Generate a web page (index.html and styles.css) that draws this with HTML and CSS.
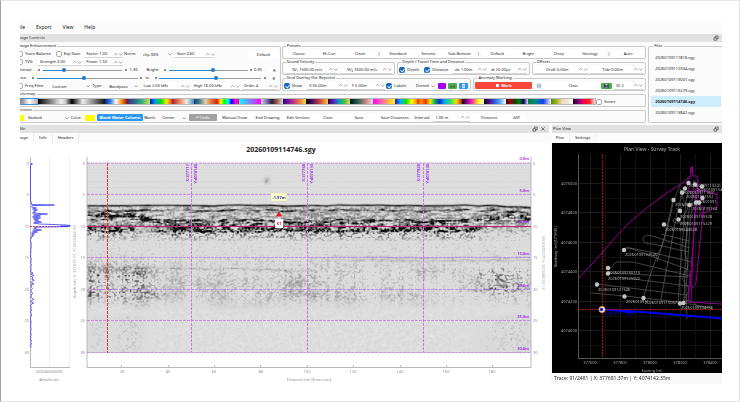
FILE: index.html
```html
<!DOCTYPE html>
<html lang="en">
<head>
<meta charset="utf-8">
<title>Sub-bottom profile viewer</title>
<link rel="stylesheet" href="styles.css">
</head>
<body>
<svg class="defs" aria-hidden="true">
  <symbol id="arrows" viewBox="0 0 10 6"><path d="M1 4.2 2.7 2.2 4.4 4.2M6 2.4 7.7 4.4 9.4 2.4"/></symbol>
  <symbol id="down" viewBox="0 0 6 6"><path d="M1.3 2.2 3 4.1 4.7 2.2"/></symbol>
  <symbol id="float" viewBox="0 0 6 6"><path d="M1 2.8h2.7v2.4H1zM2.4 2.8V1h2.8v2.6H3.7"/></symbol>
  <symbol id="close" viewBox="0 0 6 6"><path d="M1.3 1.3 4.7 4.7M4.7 1.3 1.3 4.7"/></symbol>
</svg>
<main class="window">
<div class="app">
  <nav class="menu"><button>File</button><button>Export</button><button>View</button><button>Help</button></nav>
  <header class="dock-title"><h2>Image Controls</h2><svg class="ico"><use href="#float"/></svg></header>

  <section class="controls">
    <div class="groups">
      <fieldset class="enhance">
        <legend>Image Enhancement</legend>
        <div class="row e1">
          <label class="check"><input type="checkbox">Trace Balance</label>
          <label class="check"><input type="checkbox">Exp Gain</label>
          <span class="spin"><input aria-label="Factor" value="Factor 1.00"><svg><use href="#arrows"/></svg></span>
          <label for="norm">Norm:</label>
          <span class="combo"><select id="norm"><option>clip-90%</option></select><svg><use href="#down"/></svg></span>
          <span class="spin"><input aria-label="Gain" value="Gain 0.60"><svg><use href="#arrows"/></svg></span>
          <i></i>
          <button class="flat">Default</button>
        </div>
        <div class="row e2">
          <label class="check"><input type="checkbox">TVG</label>
          <span class="spin"><input aria-label="Strength" value="Strength 3.00"><svg><use href="#arrows"/></svg></span>
          <span class="spin"><input aria-label="Power" value="Power 1.50"><svg><use href="#arrows"/></svg></span>
        </div>
        <div class="row e3">
          <label for="contrast">Contrast:</label>
          <b class="step"></b><input id="contrast" class="s-contrast" type="range" value="26"><b class="step"></b>
          <output>1.30</output>
          <label for="bright">Bright:</label>
          <b class="step"></b><input id="bright" class="s-bright" type="range" value="56"><b class="step"></b>
          <output>0.95</output>
          <button class="flat">R</button>
        </div>
        <div class="row e4">
          <label for="noise">Noise:</label>
          <b class="step"></b><input id="noise" class="s-noise" type="range" value="47"><b class="step"></b>
          <label for="noise-to">to</label>
          <b class="step"></b><input id="noise-to" class="s-to" type="range" value="56"><b class="step"></b>
          <button class="flat">R</button>
        </div>
        <div class="row e5">
          <label class="check"><input type="checkbox">Freq Filter</label>
          <span class="combo"><select aria-label="Filter preset"><option>Custom</option></select><svg><use href="#down"/></svg></span>
          <label for="ftype">Type:</label>
          <span class="combo"><select id="ftype"><option>Bandpass</option></select><svg><use href="#down"/></svg></span>
          <span class="spin"><input aria-label="Low" value="Low 2.00 kHz"><svg><use href="#arrows"/></svg></span>
          <span class="spin"><input aria-label="High" value="High 16.00 kHz"><svg><use href="#arrows"/></svg></span>
          <span class="spin"><input aria-label="Order" value="Order 4"><svg><use href="#arrows"/></svg></span>
        </div>
      </fieldset>

      <div class="stack">
        <fieldset>
          <legend>Presets</legend>
          <div class="row presets">
            <button class="flat">Classic</button><button class="flat">Hi-Con</button><button class="flat">Clean</button><span>|</span>
            <button class="flat">Standard</button><button class="flat">Seismic</button><button class="flat">Sub-Bottom</button><span>|</span>
            <button class="flat">Default</button><button class="flat">Bright</button><button class="flat">Deep</button><button class="flat">Geology</button><span>|</span>
            <button class="flat">Auto</button>
          </div>
        </fieldset>
        <div class="trio">
          <fieldset>
            <legend>Sound Velocity</legend>
            <div class="row halves">
              <span class="spin mid"><input aria-label="Water velocity" value="SV₁ 1500.00 m/s"><svg><use href="#arrows"/></svg></span>
              <span class="spin mid"><input aria-label="Sediment velocity" value="SV₂ 1600.00 m/s"><svg><use href="#arrows"/></svg></span>
            </div>
          </fieldset>
          <fieldset>
            <legend>Depth / Travel Time and Distance</legend>
            <div class="row depth">
              <label class="check"><input type="checkbox" checked>Depth</label>
              <label class="check"><input type="checkbox" checked>Distance</label>
              <span class="spin"><input aria-label="dx" value="dx 1.00m"><svg><use href="#arrows"/></svg></span>
              <span class="spin"><input aria-label="dt" value="dt 20.00µs"><svg><use href="#arrows"/></svg></span>
            </div>
          </fieldset>
          <fieldset>
            <legend>Offsets</legend>
            <div class="row halves">
              <span class="spin mid"><input aria-label="Draft" value="Draft 0.00m"><svg><use href="#arrows"/></svg></span>
              <span class="spin mid"><input aria-label="Tide" value="Tide 0.00m"><svg><use href="#arrows"/></svg></span>
            </div>
          </fieldset>
        </div>
        <div class="duo">
          <fieldset>
            <legend>Grid Overlay (for Reports)</legend>
            <div class="row overlay">
              <label class="check"><input type="checkbox" checked>Show</label>
              <span class="spin"><input aria-label="X spacing" value="X 50.00m"><svg><use href="#arrows"/></svg></span>
              <span class="spin"><input aria-label="Y spacing" value="Y 5.00m"><svg><use href="#arrows"/></svg></span>
              <label class="check"><input type="checkbox" checked>Labels</label>
              <span class="combo"><select aria-label="Line style"><option>Dotted</option></select><svg><use href="#down"/></svg></span>
              <button class="chip purple" aria-label="Grid colour"></button>
              <button class="chip green" aria-label="Export"><svg viewBox="0 0 9 7"><path fill="#2b5c30" d="M2 2.5h5v2.6H2z"/><path stroke="#b9dcbb" stroke-width=".7" d="M2.5 3.3h4"/></svg></button>
              <button class="chip blue" aria-label="Report"><svg viewBox="0 0 9 7"><path fill="#d8ecfd" d="M2.8 1h3.4v5H2.8z"/><path stroke="#6a9cc9" stroke-width=".7" d="M3.4 3h2.2M3.4 4.4h2.2"/></svg></button>
            </div>
          </fieldset>
          <fieldset>
            <legend>Anomaly Marking</legend>
            <div class="row anomaly">
              <button class="mark"><i></i>Mark</button>
              <button class="flat" aria-label="List"><svg class="list" viewBox="0 0 6 6"><path fill="#d9d9ec" stroke="#a3a3c4" stroke-width=".5" d="M1 1h4v4H1zM1 2.4h4M1 3.7h4"/></svg></button>
              <button class="flat">Clear</button>
              <button class="chip green" aria-label="Save marks"><svg viewBox="0 0 9 7"><path fill="#27303a" d="M2 1h5v5H2z"/><path fill="#e8d5ee" d="M3.3 1h2.4v1.7H3.3z"/><path fill="#8b79c9" d="M3 4h3v2H3z"/></svg></button>
              <span class="spin"><input aria-label="Mark id" value="ID 2"><svg><use href="#arrows"/></svg></span>
            </div>
          </fieldset>
        </div>
      </div>

      <fieldset class="wide">
        <legend>Colormap</legend>
        <div class="row maps">
          <div class="strip">
            <button class="m1" aria-label="Gray"></button><button class="m2" aria-label="Gray inverse"></button><button class="m3" aria-label="Gray dual"></button><button class="m4" aria-label="Black"></button><button class="m5" aria-label="Seismic"></button><button class="m6" aria-label="Viridis"></button><button class="m7" aria-label="Jet"></button><button class="m8" aria-label="Earth"></button><button class="m9" aria-label="Spectral"></button><button class="m10" aria-label="HSV"></button><button class="m11" aria-label="Cool"></button><button class="m12" aria-label="Twilight"></button><button class="m13" aria-label="Plasma"></button><button class="m14" aria-label="Inferno"></button><button class="m15" aria-label="Nipy"></button><button class="m16" aria-label="Cube"></button><button class="m17" aria-label="Spring"></button><button class="m18" aria-label="Rainbow"></button><button class="m19" aria-label="Prism"></button><button class="m20" aria-label="Turbo"></button><button class="m21" aria-label="Gnuplot"></button><button class="m22" aria-label="Stern"></button><button class="m23" aria-label="Flag"></button><button class="m24" aria-label="Ocean"></button><button class="m25" aria-label="Terrain"></button><button class="m26" aria-label="Heat"></button>
          </div>
          <label class="check"><input type="checkbox">Invert</label>
        </div>
      </fieldset>

      <fieldset class="wide">
        <legend>Horizon</legend>
        <div class="row horizon">
          <i class="chip yellow"></i>
          <span class="combo"><select aria-label="Horizon"><option>Seabed</option></select><svg><use href="#down"/></svg></span>
          <label for="hcolor">Color:</label>
          <button id="hcolor" class="chip yellow" aria-label="Color"></button>
          <button class="primary">Blank Water Column</button>
          <label for="blank">Blank:</label>
          <span class="combo"><select id="blank"><option>Center</option></select><svg><use href="#down"/></svg></span>
          <button class="undo">↶ Undo</button>
          <button class="flat">Manual Draw</button>
          <button class="flat">End Drawing</button>
          <button class="flat">Edit Vertices</button>
          <button class="flat">Clear</button>
          <button class="flat">Save</button>
          <button class="flat">Save Distances</button>
          <label for="interval">Interval:</label>
          <span class="spin"><input id="interval" value="1.00 m"><svg><use href="#arrows"/></svg></span>
          <button class="flat">Distance</button>
          <button class="flat">ΔXY</button>
        </div>
      </fieldset>
    </div>

    <fieldset class="files">
      <legend>Files</legend>
      <button>20260109111816.sgy</button>
      <button>20260109112334.sgy</button>
      <button>20260109113001.sgy</button>
      <button>20260109113229.sgy</button>
      <button class="current">20260109114746.sgy</button>
      <button>20260109113841.sgy</button>
    </fieldset>
  </section>

  <section class="docks">
    <article class="profile">
      <header class="dock-title"><h2>Profile</h2><svg class="ico"><use href="#float"/></svg><svg class="ico"><use href="#close"/></svg></header>
      <nav class="tabs"><button class="on">Image</button><button>Info</button><button>Headers</button></nav>
      <svg class="plot" viewBox="12 143 537 241" role="img" aria-label="Profile 20260109114746.sgy">
        <path fill="#fff" d="M12 143h537v241H12z"/>
        <text class="heading" x="281" y="152">20260109114746.sgy</text>

        <path class="faint" d="M49.500 157V367M69.500 157V367"/>
        <path class="axis" d="M30.500 157V367.500H70"/>
        <g class="tick end"><text x="29" y="165">0</text><text x="29" y="196">5</text><text x="29" y="228">10</text><text x="29" y="259">15</text><text x="29" y="291">20</text><text x="29" y="322">25</text><text x="29" y="354">30</text></g>
        <g class="tick"><text x="40" y="373">2000</text><text x="49" y="373">4000</text><text x="58" y="373">6000</text></g>
        <text class="name" x="49" y="381">Amplitude</text>
        <path class="redline" d="M30 226.500H70"/>
        <path id="wave" class="wave"/>

        <foreignObject x="87" y="163" width="444" height="190"><canvas id="echo" width="444" height="190"></canvas></foreignObject>
        <path class="axis" d="M87 157V367.500H531V157M121.500 365v2.500M168.500 365v2.500M214.500 365v2.500M260.500 365v2.500M307.500 365v2.500M353.500 365v2.500M400.500 365v2.500M446.500 365v2.500M492.500 365v2.500"/>
        <path class="grid" d="M87 163H531M87 194.500H531M87 257.500H531M87 289.500H531M87 320.500H531M87 352.500H531"/>
        <path class="grid upright" d="M191.500 163V352.500M307.500 163V352.500M423.500 163V352.500"/>
        <path stroke="#c8206c" stroke-width="1" d="M87 226.500H531"/>
        <path class="redline ping" d="M107.500 163V353"/>
        <g class="tick end"><text x="85" y="165">0</text><text x="85" y="196">5</text><text x="85" y="228">10</text><text x="85" y="259">15</text><text x="85" y="291">20</text><text x="85" y="322">25</text><text x="85" y="354">30</text></g>
        <g class="tick start"><text x="533" y="165">0</text><text x="533" y="196">5</text><text x="533" y="228">10</text><text x="533" y="259">15</text><text x="533" y="291">20</text><text x="533" y="322">25</text><text x="533" y="354">30</text></g>
        <g class="tick"><text x="122" y="373">20</text><text x="168" y="373">40</text><text x="214" y="373">60</text><text x="261" y="373">80</text><text x="307" y="373">100</text><text x="353" y="373">120</text><text x="400" y="373">140</text><text x="446" y="373">160</text><text x="492" y="373">180</text></g>
        <text class="name" x="309" y="381">Distance (m) [from nav]</text>
        <text class="tick side" transform="translate(76 262) rotate(-90)">Depth (m), X: 377671.77, Y: 4074142.33</text>
        <text class="tick side" transform="translate(545 263) rotate(-90)">X= 377869.10, Y=4074063.59</text>
        <g class="mag end"><text x="529" y="160">0.0m</text><text x="529" y="192">5.0m</text><text x="529" y="223">10.0m</text><text x="529" y="255">15.0m</text><text x="529" y="287">20.0m</text><text x="529" y="318">25.0m</text><text x="529" y="350">30.0m</text></g>
        <g class="mag end">
          <text transform="translate(189 164) rotate(-90)">X:377717</text><text transform="translate(197 164) rotate(-90)">Y:4074140</text>
          <text transform="translate(305 164) rotate(-90)">X:377768</text><text transform="translate(313 164) rotate(-90)">Y:4074133</text>
          <text transform="translate(420 164) rotate(-90)">X:377820</text><text transform="translate(429 164) rotate(-90)">Y:4074130</text>
        </g>
        <path fill="#ffffd2" stroke="#e3dfae" stroke-width=".5" d="M271 193h16v8h-16z"/>
        <text class="note" x="279" y="199">-1.97m</text>
        <path fill="#d8202c" d="M279 211.500l3.500 5h-7z"/>
        <path fill="#fff" d="M275 219h8v9h-8z"/>
        <text class="pin" x="279" y="225">K1</text>
      </svg>
    </article>

    <article class="plan">
      <header class="dock-title"><h2>Plan View</h2><svg class="ico"><use href="#float"/></svg></header>
      <nav class="tabs"><button class="on">Plan</button><button>Settings</button></nav>
      <svg class="map" viewBox="552 143 170 230" role="img" aria-label="Survey track map">
        <path fill="#000" d="M552 143h170v230H552z"/>
        <path class="mgrid" d="M590.500 154V358M620.500 154V358M650.500 154V358M680.500 154V358M710.500 154V358M579 183.500H722M579 212.500H722M579 242.500H722M579 271.500H722M579 301.500H722M579 330.500H722"/>
        <path class="mgrid dim" d="M605.500 154V358M635.500 154V358M665.500 154V358M695.500 154V358M579 168.500H722M579 198.500H722M579 227.500H722M579 257.500H722M579 286.500H722M579 316.500H722M579 345.500H722"/>
        <path fill="none" stroke="#555" d="M578.500 154V358.500H722"/>
        <text class="mtitle" x="652" y="151">Plan View - Survey Track</text>
        <g class="mtext end"><text x="577" y="185">4075000</text><text x="577" y="214">4074800</text><text x="577" y="244">4074600</text><text x="577" y="273">4074400</text><text x="577" y="303">4074200</text><text x="577" y="332">4074000</text></g>
        <g class="mtext"><text x="590" y="364">377600</text><text x="620" y="364">377800</text><text x="650" y="364">378000</text><text x="680" y="364">378200</text><text x="710" y="364">378400</text><text x="652" y="372">Easting (m)</text></g>
        <text class="mtext" transform="translate(557 247) rotate(-90)">Northing (m) [UTM36]</text>
        <g class="track">
          <path d="M680 185C676 195 674 198 672 208S665 240 660 250 648 280 643 300M684 188C680 198 674 226 672 240S664 280 661 300M688 190C684 210 682 250 678 303"/>
          <path d="M673 200 665 235 657 262M690 200 686 240 684 303M694 180 690 225 686 290 687 319"/>
          <path d="M664 225l24 6M661 234l28 7M690 248l-38-12q-8-2-9 3t10 5l36 8M692 262l-42-10-20-4q-5 1-6 2M623 250l4-3 62 23M690 276l-57-14-17 0-6 7M608 273l80 4M689 286l-72-9M597 284l90 11M591 293l34 3 62 7"/>
          <path d="M676 209q8 0 8-5M675 218q-5 4 2 5h12M685 192q-5 5 0 10t1 10-1 12 2 12-2 12 2 12-2 12 1 12-1 14"/>
          <path d="M683 300l9 1 5 5 12 2M684 303l28 5"/>
        </g>
        <path class="line" d="M579 278 602 253Q615 237 628 224 650 204 670 191 685 182 690 176L691 167 692 172 692.500 166 692.500 176 697 176 698 180 696 190 694 230 691 270 688 302 722 304M691 176 687 182 689 192 699 190 708 192 717 195M701 190l-1 25 17-8V192M698 181l-4 45-3 75M704 206l-4 35-4 42q-3 8-6 2v-14"/>
        <g class="mtext tags start">
          <text x="689" y="187">20260109113241</text><text x="697" y="191">20260109134</text><text x="683" y="194">20260109111601</text><text x="686" y="198">202601091552</text><text x="675" y="206">20260109125</text><text x="696" y="203">202601091</text><text x="692" y="210">20260109134</text><text x="680" y="218">20260109155328</text><text x="680" y="225">20260109115229</text><text x="665" y="231">20260109140628</text>
          <text x="625" y="256">20260109132545</text><text x="608" y="274">20260109130713</text><text x="608" y="280">20260109125922</text><text x="598" y="291">20260109121346</text><text x="626" y="303">2026010911</text><text x="645" y="304">20260109115037</text><text x="681" y="309">20260109104756</text>
        </g>
        <g fill="#c4c4c4"><circle cx="688.500" cy="183" r="2.200"/><circle cx="695" cy="184.500" r="2.200"/><circle cx="702" cy="186.500" r="2.200"/><circle cx="685" cy="188.500" r="2.200"/><circle cx="682" cy="192.500" r="2.200"/><circle cx="673.500" cy="200" r="2.200"/><circle cx="702.500" cy="198" r="2.200"/><circle cx="696" cy="202.500" r="2.200"/><circle cx="699" cy="202.500" r="2.200"/><circle cx="689.500" cy="205" r="2.200"/><circle cx="680" cy="211" r="2.200"/><circle cx="678.500" cy="219.500" r="2.200"/><circle cx="664" cy="224.500" r="2.200"/><circle cx="624" cy="250" r="2.200"/><circle cx="608" cy="268" r="2.200"/><circle cx="608" cy="273.500" r="2.200"/><circle cx="597" cy="284.500" r="2.200"/><circle cx="624.500" cy="296.500" r="2.200"/><circle cx="643.500" cy="298" r="2.200"/><circle cx="680" cy="303.500" r="2.200"/><circle cx="683.500" cy="303" r="2.200"/></g>
        <path fill="none" stroke="#0000f0" stroke-width="1.800" d="M601 309.500 642 312 722 318.500"/>
        <path fill="#0000f0" d="M603 308.500l28 2v3z"/>
        <text class="mtext tags active" x="603" y="315">20260109114746</text>
        <path class="cross" d="M602.500 154V358M579 309.500H722"/>
        <circle cx="602" cy="309.500" r="3" fill="#fff" stroke="#e79a28"/><circle cx="601.500" cy="309.500" r="1.700" fill="#1a1af0"/>
      </svg>
      <footer class="status">Trace: 91/2481 | X: 377681.37m | Y: 4074142.35m</footer>
    </article>
  </section>
</div>
</main>
<script src="plot.js"></script>
</body>
</html>
```
FILE: styles.css
```css
* { box-sizing: border-box; }

body {
  margin: 0;
  min-height: 100vh;
  padding: 19px 17px 16px 19px;
  border: 1px solid #e6e6e6;
  border-left: 1px solid #a2a2a2;
  background: #fff;
  color: #222;
  font: 4px/8px "Noto Sans", "Open Sans", sans-serif;
}

.defs { position: absolute; width: 0; height: 0; }
.window { overflow: hidden; background: #fbfbfb; }
.app { margin-left: -8px; }

button, input, select { font: inherit; color: inherit; margin: 0; padding: 0; border: 0; background: none; }
select { appearance: none; }
svg { display: block; fill: none; }

.menu { display: flex; height: 14px; padding-left: 5px; gap: 11px; align-items: center; font-size: 5px; }

.dock-title { display: flex; align-items: center; gap: 2px; height: 8px; padding: 0 3px 0 4px; background: #e2e2e2; }
.dock-title h2 { flex: 1; margin: 0; font-size: 4px; font-weight: 400; }
.ico { width: 6px; height: 6px; stroke: #444; stroke-width: .7; }

.controls { display: grid; grid-template-columns: 636fr 74fr; gap: 2px; padding: 1px 0 2px; }
.groups { display: grid; grid-template-columns: 270fr 366fr; column-gap: 1px; }
.wide { grid-column: 1 / -1; }

fieldset { min-width: 0; margin: 0; padding: 0 1px; border: 1px solid #c9c9c9; border-radius: 2px; }
legend { margin-left: 2px; padding: 0 1px; line-height: 6px; }

.row { display: grid; align-items: center; height: 9px; white-space: nowrap; }
.enhance { padding-top: 1px; }
.enhance .row { height: 8px; }
.trio { display: grid; grid-template-columns: 114fr 133fr 115fr; gap: 2px; }
.duo { display: grid; grid-template-columns: 190fr 173fr; gap: 2px; }

.e1, .e2, .e5 { padding-left: 3px; }
.e3, .e4 { padding-left: 1px; }
.e1 { grid-template-columns: 39fr 28fr 41fr 16fr 34fr 43fr 32fr 31fr; }
.e2 { grid-template-columns: 20fr 47fr 41fr 157fr; }
.e3 { grid-template-columns: 20fr 8fr 80fr 8fr 17fr 15fr 8fr 80fr 6fr 16fr 9fr; }
.e4 { grid-template-columns: 14fr 8fr 102fr 8fr 7fr 7fr 103fr 8fr 10fr; }
.e5 { grid-template-columns: 32fr 43fr 14fr 34fr 50fr 50fr 38fr; }
.presets { grid-template-columns: 30fr 31fr 31fr 7fr 31fr 31fr 31fr 7fr 31fr 31fr 31fr 31fr 7fr 32fr; text-align: center; }
.halves { grid-template-columns: 1fr 1fr; }
.depth { grid-template-columns: 25fr 28fr 36fr 40fr; }
.overlay { grid-template-columns: 22fr 42fr 37fr 26fr 24fr 10fr 11fr 11fr; }
.anomaly { grid-template-columns: 57fr 14fr 54fr 13fr 31fr; }
.maps { grid-template-columns: 582fr 48fr; padding-left: 1px; }
.horizon { grid-template-columns: 11fr 46fr 13fr 12fr 49fr 15fr 29fr 30fr 34fr 32fr 30fr 30fr 32fr 40fr 18fr 39fr 36fr 19fr 119fr; }

.check { display: flex; align-items: center; gap: 2px; }
.check input { appearance: none; flex: none; width: 6px; height: 6px; border: 1px solid #aaa; border-radius: 2px; background: #fff; }
.check input:checked { border: 0; background: #1668b8; position: relative; }
.check input:checked::after { content: ""; position: absolute; left: 2px; top: 1px; width: 2px; height: 3px; border: solid #d7e9fa; border-width: 0 1px 1px 0; rotate: 40deg; }

.spin, .combo { display: flex; align-items: center; min-width: 0; height: 8px; margin: 0 1px; }
.spin { border-bottom: 1px solid #d2d2d2; background: #fff; }
.spin input, .combo select { flex: 1; width: 0; min-width: 0; height: 7px; padding-left: 2px; line-height: 7px; }
.spin.mid input { text-align: center; }
.spin svg { width: 10px; height: 6px; }
.combo svg { width: 6px; height: 6px; }
.spin svg, .combo svg { flex: none; stroke: #777; stroke-width: .6; }

.flat { height: 7px; background: #fff; line-height: 7px; text-align: center; }
.step { width: 2px; height: 2px; margin: auto; border-radius: 1px; background: #666; }

input[type="range"] { appearance: none; width: 100%; height: 6px; }
input[type="range"]::-webkit-slider-thumb { appearance: none; width: 4px; height: 4px; border-radius: 2px; background: #1976cc; }
input.s-contrast { background: linear-gradient(90deg, #2b86d8 26%, #9b9b9b 0) center / 100% 1px no-repeat; }
input.s-bright, input.s-to { background: linear-gradient(90deg, #2b86d8 56%, #9b9b9b 0) center / 100% 1px no-repeat; }
input.s-noise { background: linear-gradient(90deg, #2b86d8 47%, #9b9b9b 0) center / 100% 1px no-repeat; }

.chip { height: 6px; margin: 0 1px; border-radius: 1px; }
.chip svg { width: 100%; height: 6px; }
.purple { background: #a400f5; }
.green { background: #4cae50; }
.blue { background: #2a98f2; }
.yellow { background: #ff0; }
.mark { display: flex; align-items: center; justify-content: center; gap: 2px; height: 7px; border-radius: 1px; background: #f9463a; color: #fff; font-weight: 700; line-height: 7px; }
.mark i { width: 3px; height: 3px; background: #fff; }
.list { width: 6px; height: 6px; margin: auto; }
.primary, .undo { height: 7px; margin: 0 1px; border-radius: 1px; color: #fff; line-height: 7px; }
.primary { background: #2a98f2; font-weight: 700; }
.undo { background: #a2a2a2; }

.strip { display: flex; height: 7px; border: 1px solid #b9b9b9; }
.strip button { flex: 1; }
.m1 { background: linear-gradient(90deg, #888, #999 30%, #fff 60%, #aaa); outline: 1px solid #3a93dc; }
.m2 { background: linear-gradient(90deg, #000, #eee); }
.m3 { background: linear-gradient(90deg, #eee, #ccc 20%, #000 50%, #777 75%, #f4f4f4); }
.m4 { background: linear-gradient(90deg, #eee, #111); }
.m5 { background: linear-gradient(90deg, #012a9a, #2e7fe0, #fff 50%, #f09a20, #b01000); }
.m6 { background: linear-gradient(90deg, #46256e, #31688e, #35b779, #d8e050); }
.m7 { background: linear-gradient(90deg, #0018c8, #00a0e0, #00e000, #f0f000, #e04020); }
.m8 { background: linear-gradient(90deg, #b01828, #e88060, #f6ecdc, #3f8fd0); }
.m9 { background: linear-gradient(90deg, #183a78, #4a8888, #e0d0b0, #e07828, #d02030); }
.m10 { background: linear-gradient(90deg, #f00, #ff0, #0f0, #0ff, #00f, #f0f, #f04); }
.m11 { background: linear-gradient(90deg, #0ff, #f0f); }
.m12 { background: linear-gradient(90deg, #ded7e0, #7676b8, #2a1a30, #a86050, #e4dcdc); }
.m13 { background: linear-gradient(90deg, #1c0888, #a0209a, #e86858, #f4e030); }
.m14 { background: linear-gradient(90deg, #000004, #5a1068, #d84c3a, #f6d040); }
.m15 { background: linear-gradient(90deg, #300040, #6020c0, #00a0c0, #40c040, #f0e040); }
.m16 { background: linear-gradient(90deg, #001010, #206050, #c08078, #f8d8e0); }
.m17 { background: linear-gradient(90deg, #f0f, #ff8090, #ff0); }
.m18 { background: linear-gradient(90deg, #4000c0, #00b0ff, #00e000, #ff0, #ff9000); }
.m19 { background: linear-gradient(90deg, #e03000, #ff9000, #f03000, #f0f000, #00c040, #0030f0); }
.m20 { background: linear-gradient(90deg, #1020c0, #00b0f0, #30e060, #f0e000, #c02000); }
.m21 { background: linear-gradient(90deg, #000, #a000a0, #ff40a0, #ff0, #fff); }
.m22 { background: linear-gradient(90deg, #100010, #501090, #3060e0, #60b0ff, #fff); }
.m23 { background: linear-gradient(90deg, #400, #a00010, #104010, #008000, #000060, #e0e0f8); }
.m24 { background: linear-gradient(90deg, #088038, #088888, #1040ff, #f4f4ff); }
.m25 { background: linear-gradient(90deg, #509000, #a0b020, #f0d8b8, #e8e8d8, #fff); }
.m26 { background: linear-gradient(90deg, #180018, #800080, #ff0040, #ff2020, #f8e0e8); }

.files { display: flex; flex-direction: column; padding: 3px 0 0 2px; margin-right: -3px; }
.files button { height: 11px; padding-left: 4px; text-align: left; white-space: nowrap; }
.files .current { margin-right: 3px; background: #cdedfd; font-weight: 700; }

.docks { display: grid; grid-template-columns: 539fr 171fr; }
.profile { padding-right: 2px; }
.plan { padding-left: 1px; }
.profile .dock-title, .plan .dock-title { padding-left: 1px; }
.tabs { display: flex; height: 10px; }
.tabs button { padding: 0 5px; border-right: 1px solid #eee; }
.tabs button:first-child { padding-left: 4px; }
.tabs .on { background: #fff; }
.plot, .map { width: 100%; height: auto; }
.status { height: 11px; padding-left: 2px; background: #f8f8f8; font: 5px/11px "Open Sans", sans-serif; }

.plot text { text-anchor: middle; }
.heading { fill: #222; font: 700 7px "Open Sans", sans-serif; }
.tick, .name { fill: #8f8f8f; font-size: 4px; }
.side { fill: #a0a0a0; }
.mag { fill: #a010f0; font-size: 4px; font-weight: 600; }
.note { fill: #2c2ca8; font-size: 4px; font-weight: 700; }
.pin { fill: #d03040; font-size: 4px; font-weight: 700; }
.plot .end text, .map .end text { text-anchor: end; }
.plot .start text { text-anchor: start; }
.axis { stroke: #b8b8b8; }
.faint { stroke: #f1f1f1; }
.grid { stroke: #c27be0; stroke-dasharray: 3 1; stroke-opacity: .8; }
.grid.upright { stroke: #c87af0; stroke-opacity: 1; }
.redline { stroke: #f84040; stroke-dasharray: 2 1; }
.ping { stroke: #ff3030; stroke-dasharray: 3 1; }
.wave { stroke: #3838f0; stroke-width: .8; }
foreignObject canvas { display: block; }

.mgrid { stroke: #1c1c1c; }
.dim { stroke: #101010; }
.mtitle { fill: #b0b0b0; font-size: 5px; text-anchor: middle; }
.mtext { fill: #a4a4a4; font-size: 4px; text-anchor: middle; }
.start text, .map .active { text-anchor: start; }
.tags { fill: #b4b4b4; }
.active { fill: #1010c8; }
.track { stroke: #6e6e6e; stroke-width: .6; }
.line { stroke: #920092; }
.cross { stroke: #b01010; stroke-dasharray: 2 1; }
```
FILE: plot.js
```js
// Amplitude trace of the current ping: [depth y, deflection] pairs, then a noisy tail.
let seed = 7;
function rnd() {
  seed = (seed * 1664525 + 1013904223) >>> 0;
  return seed / 4294967296;
}

const peaks = [[163, 0], [164, 2], [165, 0], [201, 0], [203, 1], [204.5, 1], [205, 24], [205.6, 2], [207, 1], [208, 6], [209, 2],
  [210, 7], [211, 3], [212, 5], [213, 2], [214, 17], [215, 3], [216, 10], [217, 2], [218, 10], [219, 3], [220, 8],
  [221, 4], [222, 11], [223, 3], [224, 9], [225, 36], [225.6, 40], [226.2, 30], [226.6, 38], [227.2, 4], [228, 6], [229, 3],
  [230, 11], [231, 2], [232, 7], [233, 1], [234, 4], [235, 1], [236, 3]];
let d = "M" + peaks.map(([y, a]) => `${30.5 + a} ${y}`).join("L");
for (let y = 237; y < 348; y += 1.2) {
  const reach = y > 270 && y < 304 ? 5 : 1.8;
  d += `L${(30.5 + rnd() * rnd() * reach).toFixed(1)} ${y.toFixed(1)}`;
}
document.getElementById("wave").setAttribute("d", d);

// Echogram: horizontal streak noise, weighted by a depth profile along the line.
const canvas = document.getElementById("echo");
const W = canvas.width, H = canvas.height;
const ctx = canvas.getContext("2d");
const img = ctx.createImageData(W, H);

function noise(sx, sy) {
  const gw = Math.ceil(W / sx) + 2, gh = Math.ceil(H / sy) + 2;
  const g = Float32Array.from({ length: gw * gh }, rnd);
  return (x, y) => {
    const u = x / sx, v = y / sy, i = Math.floor(u), j = Math.floor(v), a = u - i, b = v - j;
    const p = j * gw + i;
    return (g[p] * (1 - a) + g[p + 1] * a) * (1 - b) + (g[p + gw] * (1 - a) + g[p + gw + 1] * a) * b;
  };
}
const fine = noise(1.6, 1.4), streak = noise(5, 1.4), blob = noise(26, 12), wob = noise(14, 400), column = noise(3, 400);
const bell = (v, c, w) => Math.exp(-((v - c) * (v - c)) / (w * w));
const ramp = (v, a, b) => Math.max(0, Math.min(1, (v - a) / (b - a)));
const band = (y, a, b, soft) => ramp(y, a - soft, a) * (1 - ramp(y, b, b + soft));

for (let y = 0; y < H; y++) {
  for (let x = 0; x < W; x++) {
    const f = fine(x, y), s = streak(x, y), k = blob(x, y), w = wob(x, 0) * 2 - 1;
    const left = 1 - ramp(x, 55, 80), right = ramp(x, 375, 410), mid = (1 - left) * (1 - right);
    const edge = ramp(x, 400, 440) * 2;
    let v = 221 - (y < 38 && y % 6 < 1 ? 5 : 0) + (f - 0.5) * (y < 38 ? 2 : 12);

    let ink = bell(y, 42 + w * 0.6 + edge, 1) * 175 * (0.7 + s * 0.4);
    ink += bell(y, 47 + w + edge, 1.1) * 130 * s * 1.2;
    ink += band(y, 44, 63, 2) * Math.max(0, s * 0.6 + f * 0.6 - 0.38) * 160;

    // Main reflector dips between the shallow ends of the line.
    const c = 52.5 + ramp(x, 45, 80) * 7 - right * 6;
    ink += bell(y, c, 3.6) * Math.max(0, s + f * 0.5 - 0.42) * (190 + 90 * (left + right));
    ink += mid * bell(y, 57 + w, 1) * 110 * s;
    const low = 1 - ramp(x, 385, 405) * 0.8;
    const gap = 1 - bell(x, 58, 12) * 0.8;
    ink += band(y, 63, 68, 1.5) * low * gap * Math.max(0, s * 0.7 + f * 0.7 - 0.36) * 270;
    ink += band(y, 68, 72, 6) * low * gap * Math.max(0, f * 0.9 + s * 0.5 - 0.62) * 240;
    ink += band(y, 64, 90, 14) * Math.max(0, f - 0.55) * 60;

    // Deep scatter around 16-24 m.
    const depth = band(y, 106, 132, 16);
    const str = 0.6 + left * 0.8 + bell(x, 225, 130) * 0.35 + right * 0.5;
    ink += depth * str * Math.max(0, f * 0.9 + k * 0.5 + column(x, 0) * 0.3 - 0.76) * 115;
    ink += bell(y, 103 + x * 0.018 + w, 1.2) * s * 42 * (x < 230 ? 1 : 0);
    ink += (bell(y, 94 + w, 1) + bell(y, 97 + w, 1)) * s * 40 * ramp(x, 220, 260);
    ink += bell(y, 114, 4) * (bell(x, 8, 7) + bell(x, 45, 13)) * Math.max(0, s + f - 0.9) * 250;
    ink += bell(y, 129, 8) * left * Math.max(0, f + s * 0.4 - 0.65) * 110;
    ink += bell(y, 126, 4) * bell(x, 415, 22) * Math.max(0, s + f - 0.85) * 220;
    ink += bell(y, 112, 7) * bell(x, 412, 26) * Math.max(0, s + f - 1) * 160;
    ink += band(y, 158, 186, 10) * (bell(x, 42, 14) + bell(x, 10, 10) * 0.7 + bell(x, 425, 28)) * Math.max(0, f - 0.45) * 75;
    ink += bell(x, 179, 3) * bell(y, 17, 3) * f * 70;

    v = Math.max(14, v - ink);
    const p = (y * W + x) * 4;
    img.data[p] = img.data[p + 1] = img.data[p + 2] = v;
    img.data[p + 3] = 255;
  }
}
ctx.putImageData(img, 0, 0);
```
